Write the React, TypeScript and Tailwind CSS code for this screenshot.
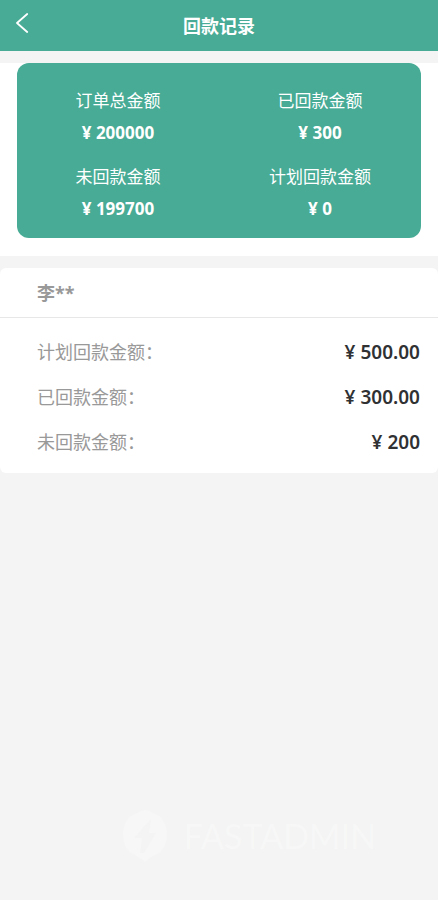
type Amount = {
  label: string;
  value: string;
};

const SUMMARY: Amount[] = [
  { label: "订单总金额", value: "200000" },
  { label: "已回款金额", value: "300" },
  { label: "未回款金额", value: "199700" },
  { label: "计划回款金额", value: "0" },
];

const RECORDS: { id: number; name: string; amounts: Amount[] }[] = [
  {
    id: 1,
    name: "李**",
    amounts: [
      { label: "计划回款金额", value: "500.00" },
      { label: "已回款金额", value: "300.00" },
      { label: "未回款金额", value: "200" },
    ],
  },
];

function Header() {
  return (
    <header className="relative flex items-center justify-center bg-[#47ab95] pb-3 pt-[14px] text-white">
      <button
        type="button"
        aria-label="返回"
        className="absolute left-3 top-3 flex h-6 w-6 items-center"
      >
        <svg
          width="20"
          height="22"
          viewBox="0 0 20 22"
          fill="none"
          stroke="currentColor"
          strokeWidth="1.8"
          strokeLinecap="round"
          strokeLinejoin="round"
        >
          <path d="M15.2 1 5 10l10.2 9" />
        </svg>
      </button>
      <h1 className="text-[18px] font-bold leading-[25px]">回款记录</h1>
    </header>
  );
}

function Watermark() {
  return (
    <footer className="mt-auto flex items-center justify-center gap-4 pb-[38px] pl-[60px] text-[#f7f7f7]">
      <svg width="46" height="52" viewBox="0 0 46 52" aria-hidden="true">
        <path
          fill="currentColor"
          fillRule="evenodd"
          d="M23 0C19 0 16 3 11 5 5 8 1 15 1 24c0 9 3 15 8 19 5 3 9 4 14 9 5-5 9-6 14-9 5-4 8-10 8-19 0-9-4-16-10-19-5-2-8-5-12-5ZM28 10 12 28h8l-2 15h4l12-20h-7l2-13Z"
        />
      </svg>
      <span className="font-[Lato,sans-serif] text-[34px] leading-[52px]">
        FASTADMIN
      </span>
    </footer>
  );
}

export default function App() {
  return (
    <div className="flex min-h-screen flex-col bg-[#f4f4f4] font-['Noto_Sans','Noto_Sans_CJK_SC',sans-serif]">
      <Header />

      <main className="mt-3 flex flex-col gap-3">
        <section className="bg-white px-[17px] pb-[18px]">
          <dl className="grid grid-cols-2 gap-y-3 rounded-xl bg-[#47ab95] pb-[13px] pt-[22px] text-center text-[17px] leading-8 text-white">
            {SUMMARY.map(({ label, value }) => (
              <div key={label}>
                <dt>{label}</dt>
                <dd className="font-bold">¥ {value}</dd>
              </div>
            ))}
          </dl>
        </section>

        {RECORDS.map(({ id, name, amounts }) => (
          <section key={id} className="rounded-md bg-white">
            <h2 className="border-b border-[#e7e7e7] pl-[37px] pt-px text-[18px] font-bold leading-[48px] text-[#999]">
              {name}
            </h2>
            <dl className="pb-2 pl-[37px] pr-[18px] pt-3">
              {amounts.map(({ label, value }) => (
                <div
                  key={label}
                  className="flex items-center justify-between leading-[45px]"
                >
                  <dt className="text-[18px] text-[#999]">{label}：</dt>
                  <dd className="text-[19px] font-semibold text-[#303133]">
                    ¥ {value}
                  </dd>
                </div>
              ))}
            </dl>
          </section>
        ))}
      </main>

      <Watermark />
    </div>
  );
}
